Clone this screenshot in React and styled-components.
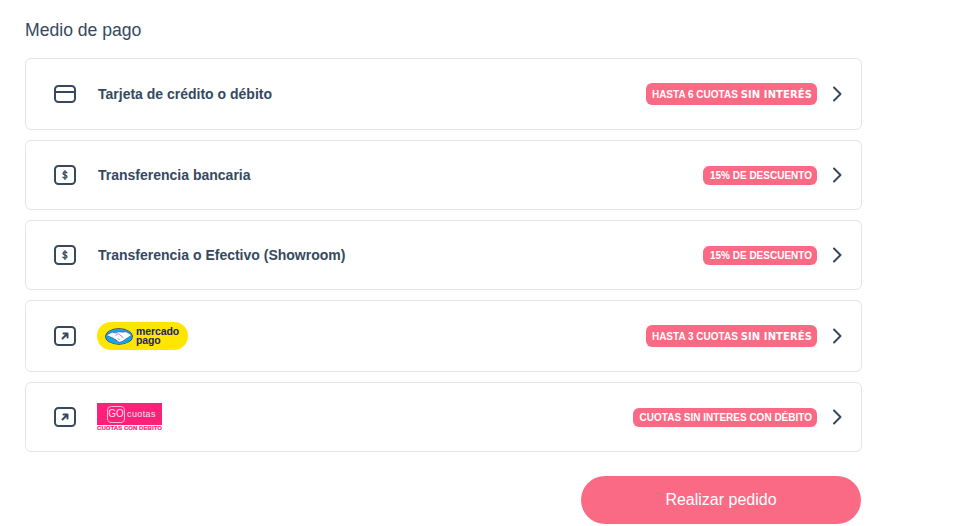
import React from "react";
import styled, { createGlobalStyle } from "styled-components";

const GlobalStyle = createGlobalStyle`
  html, body {
    margin: 0;
    padding: 0;
    background: #fff;
    font-family: "Liberation Sans", Arial, sans-serif;
  }
`;

const Page = styled.div`
  width: 954px;
  height: 526px;
  box-sizing: border-box;
  padding: 20px 92px 0 25px;
  overflow: hidden;
`;

const Title = styled.h2`
  margin: 0 0 18px;
  font-size: 17.6px;
  line-height: 20px;
  font-weight: 400;
  color: #34495e;
`;

const List = styled.div`
  display: flex;
  flex-direction: column;
  gap: 10px;
`;

const Card = styled.div`
  height: ${(p) => (p.$tall ? 72 : 70)}px;
  box-sizing: border-box;
  display: flex;
  align-items: center;
  padding: 0 19px 0 27px;
  background: #fff;
  border: 1px solid #e3e5e8;
  border-radius: 6px;
`;

const IconSlot = styled.svg`
  width: 24px;
  height: 24px;
  flex: none;
  margin-right: 21px;
  fill: none;
  stroke: #34495e;
  stroke-width: 2;
  stroke-linecap: round;
  stroke-linejoin: round;
`;

const Label = styled.span`
  font-size: 14px;
  font-weight: 700;
  color: #34495e;
`;

const Badge = styled.span`
  margin-left: auto;
  height: ${(p) => (p.$tall ? 22 : 19)}px;
  display: flex;
  align-items: center;
  box-sizing: border-box;
  padding: 0 5px 0 ${(p) => (p.$tall ? 6 : 7)}px;
  border-radius: 6px;
  background: #fa6a85;
  color: #fff;
  font-size: 10px;
  font-weight: 700;
  white-space: pre;
`;

const Strong = styled.b`
  font-family: "DejaVu Sans", "Liberation Sans", sans-serif;
  font-size: 10px;
  font-weight: 700;
  letter-spacing: 0.1px;
`;

const Chevron = styled.svg`
  width: 10px;
  height: 16px;
  flex: none;
  margin-left: 15px;
  fill: none;
  stroke: #34495e;
  stroke-width: 2;
  stroke-linecap: round;
  stroke-linejoin: round;
`;

const MercadoPill = styled.div`
  width: 91px;
  height: 28px;
  display: flex;
  align-items: center;
  box-sizing: border-box;
  padding-left: 8px;
  gap: 3px;
  margin-left: -1px;
  border-radius: 14px;
  background: #ffe600;
`;

const MercadoText = styled.span`
  font-size: 10.5px;
  line-height: 9.5px;
  font-weight: 700;
  color: #22236b;
  letter-spacing: -0.1px;
`;

const GoLogo = styled.div`
  width: 65px;
  margin-left: -1px;
  margin-top: 1px;
  display: flex;
  flex-direction: column;
  align-items: stretch;
`;

const GoBanner = styled.div`
  height: 22px;
  display: flex;
  align-items: center;
  gap: 2px;
  padding-left: 10px;
  background: #ff2079;
  color: #ffe3ee;
  box-sizing: border-box;
`;

const GoBox = styled.span`
  width: 18px;
  height: 17px;
  box-sizing: border-box;
  display: flex;
  align-items: center;
  justify-content: center;
  border: 1px solid #ffb3d2;
  border-radius: 4px;
  font-size: 10px;
  line-height: 1;
`;

const GoWord = styled.span`
  font-size: 9px;
  letter-spacing: 0.4px;
`;

const GoCaption = styled.span`
  font-size: 6px;
  line-height: 7px;
  font-weight: 700;
  color: #ff2079;
  letter-spacing: 0.05px;
  -webkit-text-stroke: 0.2px #ff2079;
  white-space: nowrap;
`;

const Footer = styled.div`
  display: flex;
  justify-content: flex-end;
  margin-top: 24px;
  padding-right: 1px;
`;

const SubmitButton = styled.button`
  width: 280px;
  height: 48px;
  border: 0;
  border-radius: 24px;
  background: #fa6a85;
  color: #fff;
  font-family: inherit;
  font-size: 16px;
`;

const CardIcon = () => (
  <IconSlot viewBox="0 0 24 24">
    <rect x="2" y="4" width="20" height="16" rx="3.5" />
    <path d="M2 10h20" />
  </IconSlot>
);

const MoneyIcon = () => (
  <IconSlot viewBox="0 0 24 24">
    <rect x="2" y="3" width="20" height="18" rx="3.5" />
    <path
      strokeWidth="1.3"
      d="M14 9.8c-.4-.6-1.1-.9-2-.9-1.2 0-2 .5-2 1.5 0 2 4 1.1 4 3.3 0 .9-.9 1.5-2 1.5-1 0-1.7-.4-2.1-1M12 7.6v8.8"
    />
  </IconSlot>
);

const ArrowIcon = () => (
  <IconSlot viewBox="0 0 24 24">
    <rect x="2" y="3" width="20" height="18" rx="3.5" />
    <path d="M9.5 14.5L14.5 9.5M10.5 9.5h4v4" />
  </IconSlot>
);

const ChevronIcon = () => (
  <Chevron viewBox="0 0 10 16">
    <path d="M2 1.5L8.5 8 2 14.5" />
  </Chevron>
);

const MercadoLogo = () => (
  <MercadoPill>
    <svg width="28" height="17" viewBox="0 0 33 20">
      <ellipse cx="16.5" cy="10" rx="16.2" ry="9.7" fill="#22236b" />
      <ellipse cx="16.5" cy="10" rx="15.5" ry="9" fill="#17a5e6" />
      <path
        d="M1.5 8.5l7-3.5 4 1 3.5-1.5 4.5.5 4-.5 7 3.8-4 2.7-7.5 5-3 .8-2.2-1.2-5.3-3.8z"
        fill="#fff"
        stroke="#22236b"
        strokeWidth="0.5"
      />
      <path d="M12.5 8.8l3.2-2.2 6 5M12 13l2 2M15 12l2.5 2.5" fill="none" stroke="#22236b" strokeWidth="0.6" />
    </svg>
    <MercadoText>
      mercado
      <br />
      pago
    </MercadoText>
  </MercadoPill>
);

const GoCuotasLogo = () => (
  <GoLogo>
    <GoBanner>
      <GoBox>GO</GoBox>
      <GoWord>cuotas</GoWord>
    </GoBanner>
    <GoCaption>CUOTAS CON DEBITO</GoCaption>
  </GoLogo>
);

const HastaBadge = ({ count }) => (
  <Badge $tall>
    {`HASTA ${count} CUOTAS `}
    <Strong>SIN INTERÉS</Strong>
  </Badge>
);

const methods = [
  { icon: <CardIcon />, content: <Label>Tarjeta de crédito o débito</Label>, badge: <HastaBadge count={6} />, tall: true },
  { icon: <MoneyIcon />, content: <Label>Transferencia bancaria</Label>, badge: <Badge>15% DE DESCUENTO</Badge> },
  { icon: <MoneyIcon />, content: <Label>Transferencia o Efectivo (Showroom)</Label>, badge: <Badge>15% DE DESCUENTO</Badge> },
  { icon: <ArrowIcon />, content: <MercadoLogo />, badge: <HastaBadge count={3} />, tall: true },
  { icon: <ArrowIcon />, content: <GoCuotasLogo />, badge: <Badge>CUOTAS SIN INTERES CON DÉBITO</Badge> },
];

export default function App() {
  return (
    <Page>
      <GlobalStyle />
      <Title>Medio de pago</Title>
      <List>
        {methods.map((m, i) => (
          <Card key={i} $tall={m.tall}>
            {m.icon}
            {m.content}
            {m.badge}
            <ChevronIcon />
          </Card>
        ))}
      </List>
      <Footer>
        <SubmitButton>Realizar pedido</SubmitButton>
      </Footer>
    </Page>
  );
}
